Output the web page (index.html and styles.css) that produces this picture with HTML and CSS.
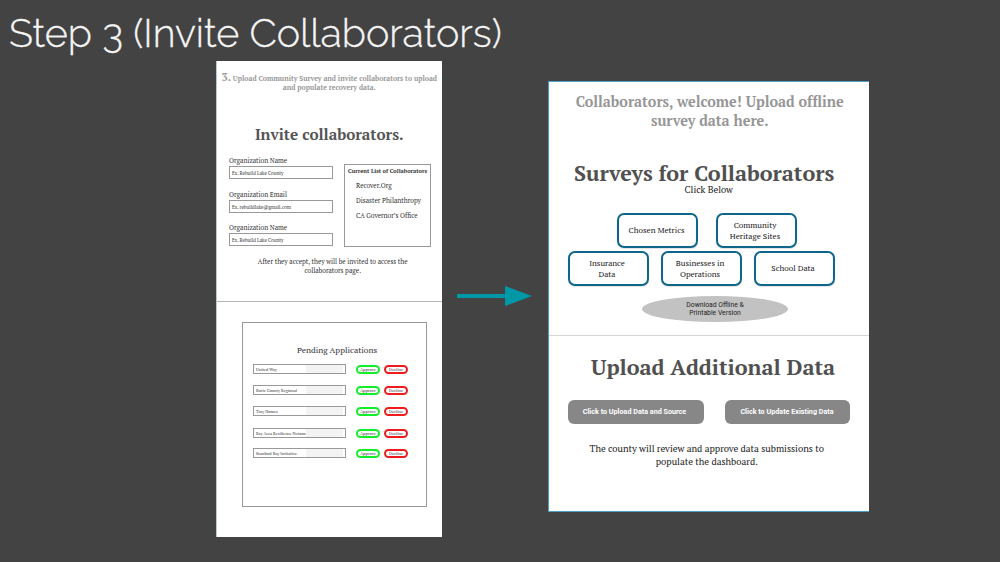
FILE: index.html
```html
<!DOCTYPE html>
<html lang="en">
<head>
<meta charset="utf-8">
<title>Step 3 (Invite Collaborators)</title>
<link rel="stylesheet" href="styles.css">
</head>
<body>
<main class="slide">
  <h1 class="slide-title">Step 3 (Invite Collaborators)</h1>
  <div class="stage">
    <section class="page invite">
      <div class="invite-top">
        <p class="invite-intro"><b>3.</b> Upload Community Survey and invite collaborators to upload<br>and populate recovery data.</p>
        <h2 class="invite-heading">Invite collaborators.</h2>
        <div class="invite-form">
          <div class="fields">
            <label>Organization Name</label><div class="input">Ex. Rebuild Lake County</div>
            <label>Organization Email</label><div class="input">Ex. rebuildlake@gmail.com</div>
            <label>Organization Name</label><div class="input">Ex. Rebuild Lake County</div>
          </div>
          <div class="current">
            <h3>Current List of Collaborators</h3>
            <ul><li>Recover.Org</li><li>Disaster Philanthropy</li><li>CA Governor’s Office</li></ul>
          </div>
        </div>
        <p class="invite-note">After they accept, they will be invited to access the<br>collaborators page.</p>
      </div>
      <div class="pending">
        <h3>Pending Applications</h3>
        <div class="row"><div class="org">United Way</div><span class="pill approve">Approve</span><span class="pill decline">Decline</span></div>
        <div class="row"><div class="org">Butte County Regional</div><span class="pill approve">Approve</span><span class="pill decline">Decline</span></div>
        <div class="row"><div class="org">Tiny Homes</div><span class="pill approve">Approve</span><span class="pill decline">Decline</span></div>
        <div class="row late"><div class="org">Bay Area Resilience Networ</div><span class="pill approve">Approve</span><span class="pill decline">Decline</span></div>
        <div class="row last"><div class="org">Stanford Bay Initiative</div><span class="pill approve">Approve</span><span class="pill decline">Decline</span></div>
      </div>
    </section>
    <svg class="arrow" width="76" height="20" viewBox="0 0 76 20"><path d="M0 8H48V0L75 10L48 20V12H0Z" fill="#0097a7"/></svg>
    <section class="page surveys">
      <div class="surveys-top">
        <p class="welcome">Collaborators, welcome! Upload offline<br>survey data here.</p>
        <h2 class="surveys-heading">Surveys for Collaborators</h2>
        <p class="click-below">Click Below</p>
        <div class="choices first"><div class="choice">Chosen Metrics</div><div class="choice">Community<br>Heritage Sites</div></div>
        <div class="choices second"><div class="choice">Insurance<br>Data</div><div class="choice">Businesses in<br>Operations</div><div class="choice">School Data</div></div>
        <div class="download">Download Offline &amp;<br>Printable Version</div>
      </div>
      <h2 class="upload-heading">Upload Additional Data</h2>
      <div class="actions"><div class="action wide">Click to Upload Data and Source</div><div class="action">Click to Update Existing Data</div></div>
      <p class="review">The county will review and approve data submissions to<br>populate the dashboard.</p>
    </section>
  </div>
</main>
</body>
</html>
```

FILE: styles.css
```css
* { box-sizing: border-box; margin: 0; padding: 0; }
body { width: 1000px; height: 562px; overflow: hidden; background: #434343; font-family: "PT Serif", "Liberation Serif", serif; }
.slide { height: 562px; display: flex; flex-direction: column; }
.slide-title { height: 61px; padding: 8px 0 0 9px; font: 300 39.5px/50px Raleway, Lato, sans-serif; -webkit-text-stroke: .3px #f5f5f5; color: #f5f5f5; white-space: nowrap; }
.stage { display: flex; align-items: flex-start; padding-left: 216px; }
.page { background: #fff; white-space: nowrap; }
h2, h3 { font-weight: 700; }

.invite { width: 225.5px; height: 476px; border-left: 1px solid #b9c8cc; }
.invite-top { height: 241px; padding-top: 12px; border-bottom: 1px solid #b5b5b5; }
.invite-intro { text-align: center; font-weight: 700; font-size: 6.97px; line-height: 9.3px; color: #999; }
.invite-intro b { font-size: 11px; line-height: 8px; }
.invite-heading { margin-top: 31.4px; text-align: center; font-size: 15.3px; line-height: 20px; color: #555; }
.invite-form { display: flex; gap: 11px; margin: 12px 0 0 12px; }
.fields { width: 104px; }
.fields label { display: block; font-size: 6.7px; line-height: 10px; color: #333; }
.input { height: 13px; margin-bottom: 10.7px; padding-left: 2px; border: 1px solid #999; font-size: 4.8px; line-height: 12px; color: #333; }
.current { width: 87px; height: 83px; margin-top: 8px; padding-top: 1px; border: 1px solid #999; color: #333; }
.current h3 { text-align: center; font-size: 5.75px; line-height: 10px; }
.current ul { list-style: none; padding: 2px 0 0 11px; font-size: 6.7px; line-height: 15px; }
.invite-note { text-align: center; font-size: 6.7px; line-height: 9px; padding-left: 7px; color: #333; }

.pending { width: 185px; height: 185px; margin: 20px 0 0 25px; padding: 20px 0 0 10px; border: 1px solid #999; color: #333; }
.pending h3 { font-weight: 400; font-size: 8.45px; line-height: 14px; padding-left: 44px; }
.row { display: flex; align-items: center; gap: 4px; height: 10px; margin-top: 11px; }
.pending h3 + .row { margin-top: 7px; }
.row.late { margin-top: 12px; }
.row.last { margin-top: 10px; }
.org { width: 93px; height: 10px; margin-right: 6px; padding-left: 2px; border: 1px solid #999; background: linear-gradient(#f3f3f3, #f3f3f3) 52px 0 / 37px 100% no-repeat; font-size: 4.1px; line-height: 9px; }
.pill { width: 24px; height: 9px; border-radius: 5px; border: 2px solid #12ee2a; text-align: center; font-size: 4.2px; line-height: 5px; }
.decline { border-color: #f01c1c; }

.arrow { margin: 225px 15px 0 15.5px; flex: none; }

.surveys { width: 320.5px; height: 431px; margin-top: 20px; border: 1px solid #4a9fc9; border-right: 0; }
.surveys-top { height: 254px; padding-top: 9.5px; border-bottom: 1px solid #d5d5d5; }
.welcome { padding-left: 2px; text-align: center; font-weight: 700; font-size: 14.4px; line-height: 19px; color: #969696; }
.surveys-heading { margin-top: 29.5px; padding-left: 25px; font-size: 21.6px; line-height: 28px; color: #505050; }
.click-below { margin-top: -2px; text-align: center; font-size: 9.4px; line-height: 10px; color: #222; }
.choices { display: flex; }
.first { margin: 18px 0 0 68px; gap: 17.5px; }
.second { margin: 3px 0 0 18.5px; gap: 12px; }
.choice { width: 81px; height: 35px; display: flex; align-items: center; justify-content: center; text-align: center; padding-right: 2px; border: 2px solid #0f668b; border-radius: 7px; box-shadow: 0 1px 1px rgba(0, 0, 0, .12); font-size: 8.15px; line-height: 10.7px; color: #222; }
.download { width: 146px; height: 26px; margin: 10px 0 0 93px; display: flex; align-items: center; justify-content: center; border-radius: 50%; background: #c2c2c2; text-align: center; font: 6.8px/8px Roboto, sans-serif; color: #222; }
.upload-heading { margin-top: 17px; padding-left: 42px; font-size: 21.6px; line-height: 28px; color: #505050; }
.actions { display: flex; gap: 21px; margin: 19px 0 0 18.5px; }
.action { width: 125px; height: 24px; border-radius: 6px; background: #878787; text-align: center; font: 700 7.2px/24px Roboto, sans-serif; color: #fff; }
.wide { width: 136px; padding-right: 2px; }
.review { margin-top: 19px; padding-right: 4px; text-align: center; font-size: 9.48px; line-height: 12.7px; color: #222; }
```
